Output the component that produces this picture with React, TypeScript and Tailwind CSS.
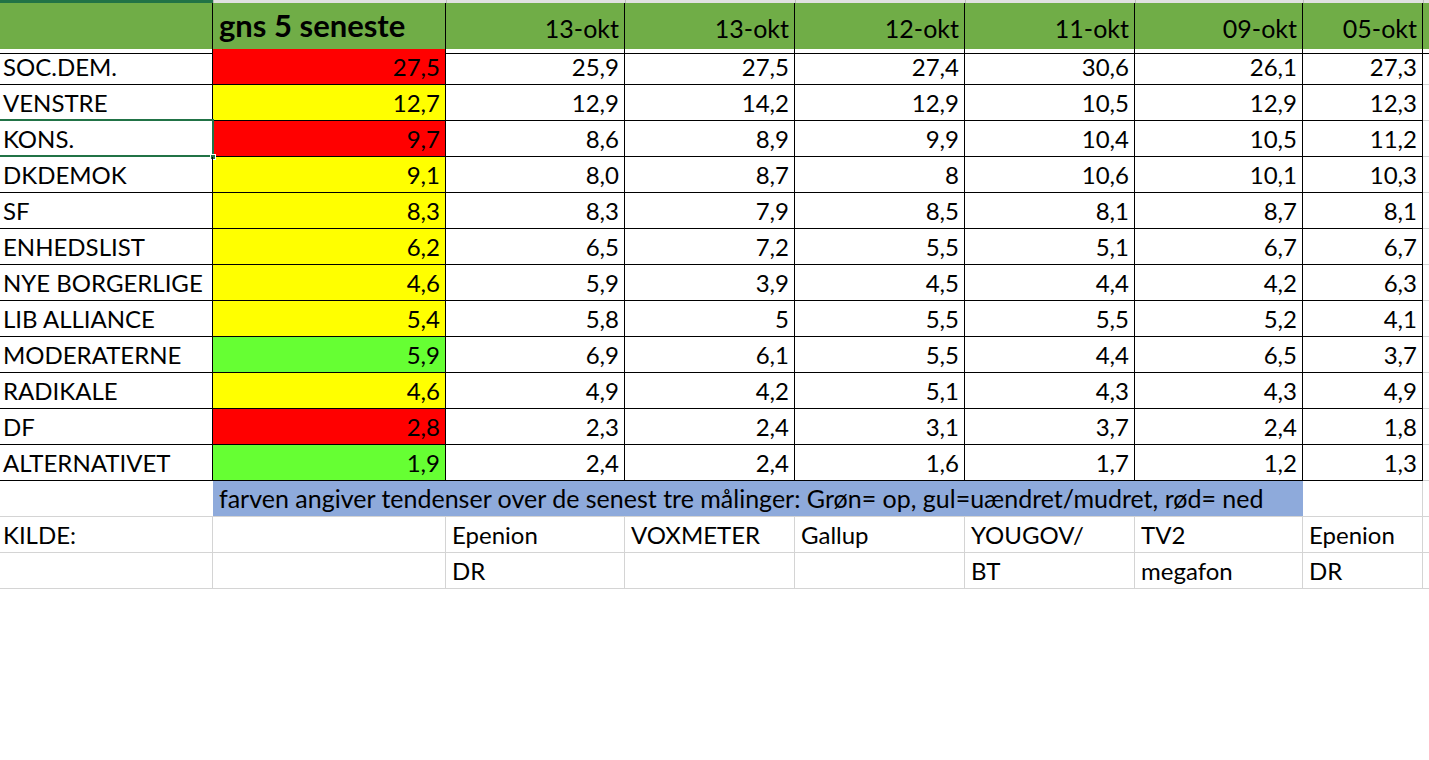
import React from "react";

type Row = {
  name: string;
  avg: string;
  tone: "red" | "yellow" | "green";
  values: string[];
};

const rows: Row[] = [
  { name: "SOC.DEM.", avg: "27,5", tone: "red", values: ["25,9", "27,5", "27,4", "30,6", "26,1", "27,3"] },
  { name: "VENSTRE", avg: "12,7", tone: "yellow", values: ["12,9", "14,2", "12,9", "10,5", "12,9", "12,3"] },
  { name: "KONS.", avg: "9,7", tone: "red", values: ["8,6", "8,9", "9,9", "10,4", "10,5", "11,2"] },
  { name: "DKDEMOK", avg: "9,1", tone: "yellow", values: ["8,0", "8,7", "8", "10,6", "10,1", "10,3"] },
  { name: "SF", avg: "8,3", tone: "yellow", values: ["8,3", "7,9", "8,5", "8,1", "8,7", "8,1"] },
  { name: "ENHEDSLIST", avg: "6,2", tone: "yellow", values: ["6,5", "7,2", "5,5", "5,1", "6,7", "6,7"] },
  { name: "NYE BORGERLIGE", avg: "4,6", tone: "yellow", values: ["5,9", "3,9", "4,5", "4,4", "4,2", "6,3"] },
  { name: "LIB ALLIANCE", avg: "5,4", tone: "yellow", values: ["5,8", "5", "5,5", "5,5", "5,2", "4,1"] },
  { name: "MODERATERNE", avg: "5,9", tone: "green", values: ["6,9", "6,1", "5,5", "4,4", "6,5", "3,7"] },
  { name: "RADIKALE", avg: "4,6", tone: "yellow", values: ["4,9", "4,2", "5,1", "4,3", "4,3", "4,9"] },
  { name: "DF", avg: "2,8", tone: "red", values: ["2,3", "2,4", "3,1", "3,7", "2,4", "1,8"] },
  { name: "ALTERNATIVET", avg: "1,9", tone: "green", values: ["2,4", "2,4", "1,6", "1,7", "1,2", "1,3"] },
];

const dates = ["13-okt", "13-okt", "12-okt", "11-okt", "09-okt", "05-okt"];
const sources = ["Epenion", "VOXMETER", "Gallup", "YOUGOV/", "TV2", "Epenion"];
const sources2 = ["DR", "", "", "BT", "megafon", "DR"];

const toneClass = {
  red: "bg-[#ff0000]",
  yellow: "bg-[#ffff00]",
  green: "bg-[#66ff33]",
};

const cols = "grid grid-cols-[213px_233px_179px_170px_170px_170px_168px_120px_1fr]";

export default function App() {
  return (
    <div className="w-[1429px] h-[760px] bg-white overflow-hidden text-black font-['Lato',sans-serif] text-[24px]">
      {/* column header strip */}
      <div className={`${cols} h-[3px]`}>
        <div className="bg-[#217346]" />
        {Array.from({ length: 8 }).map((_, i) => (
          <div key={i} className="bg-[#e1e1e1] border-l border-[#bdbdbd]" />
        ))}
      </div>

      {/* header */}
      <div className={`${cols} h-[46px] bg-[#70ad47]`}>
        <div className="border-r border-b border-black" />
        <div className="border-r border-b border-black pl-[6px] leading-[44px] font-bold text-[31px] whitespace-nowrap">
          gns 5 seneste
        </div>
        {dates.map((d, i) => (
          <div key={i} className="border-r border-b border-black pr-[5px] text-right leading-[50px] text-[25px]">
            {d}
          </div>
        ))}
        <div className="border-b border-black" />
      </div>

      {/* data rows */}
      {rows.map((r, idx) => (
        <div key={r.name} className={`${cols} h-[36px] leading-[35px]`}>
          <div className="relative border-r border-b border-black pl-[3px] whitespace-nowrap">
            {r.name}
            {idx === 2 && (
              <>
                <div className="absolute left-0 right-[-2px] top-[-2px] bottom-[-1px] border-2 border-l-0 border-[#217346]" />
                <div className="absolute right-[-4px] bottom-[-4px] w-[6px] h-[6px] bg-[#217346] border border-white" />
              </>
            )}
          </div>
          <div className={`${toneClass[r.tone]} border-r border-b border-black pr-[5px] text-right`}>
            {r.avg}
          </div>
          {r.values.map((v, i) => (
            <div key={i} className="border-r border-b border-black pr-[5px] text-right">
              {v}
            </div>
          ))}
          <div className="border-b border-[#d4d4d4]" />
        </div>
      ))}

      {/* legend row */}
      <div className={`${cols} h-[36px] leading-[35px]`}>
        <div className="border-b border-[#d4d4d4]" />
        <div className="col-span-6 bg-[#8eaadb] border-b border-[#d4d4d4] pl-[6px] whitespace-nowrap text-[25px]">
          farven angiver tendenser over de senest tre målinger: Grøn= op, gul=uændret/mudret, rød= ned
        </div>
        <div className="border-r border-b border-[#d4d4d4]" />
        <div className="border-b border-[#d4d4d4]" />
      </div>

      {/* sources */}
      <div className={`${cols} h-[36px] leading-[35px]`}>
        <div className="border-r border-b border-[#d4d4d4] pl-[3px]">KILDE:</div>
        <div className="border-r border-b border-[#d4d4d4]" />
        {sources.map((s, i) => (
          <div key={i} className="border-r border-b border-[#d4d4d4] pl-[6px] whitespace-nowrap">
            {s}
          </div>
        ))}
        <div className="border-b border-[#d4d4d4]" />
      </div>
      <div className={`${cols} h-[36px] leading-[35px]`}>
        <div className="border-r border-b border-[#d4d4d4]" />
        <div className="border-r border-b border-[#d4d4d4]" />
        {sources2.map((s, i) => (
          <div key={i} className="border-r border-b border-[#d4d4d4] pl-[6px] whitespace-nowrap">
            {s}
          </div>
        ))}
        <div className="border-b border-[#d4d4d4]" />
      </div>
    </div>
  );
}
